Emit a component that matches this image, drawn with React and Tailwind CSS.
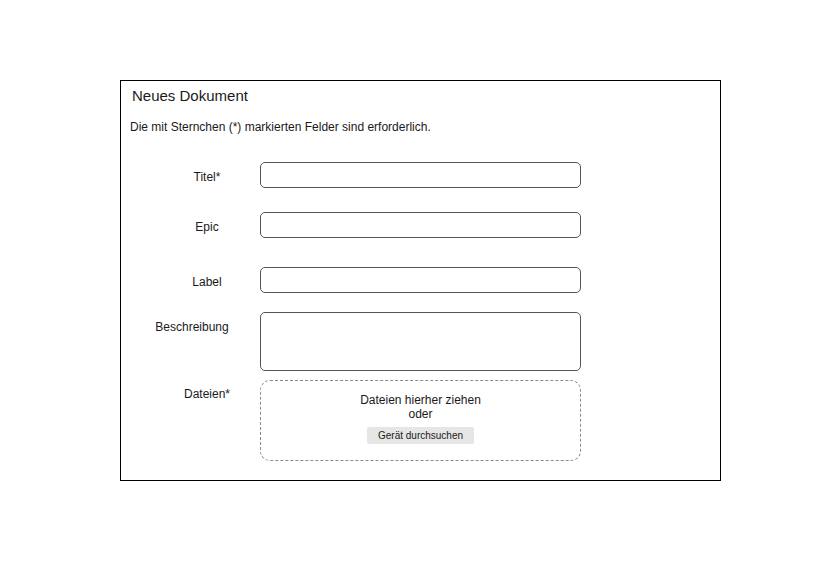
import React from "react";

const rows = [
  { label: "Titel*", gap: "mt-[28px]", h: "h-[26px]" },
  { label: "Epic", gap: "mt-[24px]", h: "h-[26px]" },
  { label: "Label", gap: "mt-[29px]", h: "h-[26px]" },
  { label: "Beschreibung", gap: "mt-[19px]", h: "h-[59px]", shift: true },
];

const App = () => {
  return (
    <div className="w-[827px] h-[583px] bg-white pt-[80px] pl-[120px] font-['Liberation_Sans',Arial,sans-serif] text-[#1a1a1a]">
      <div className="w-[601px] h-[401px] border border-black">
        <div className="pl-[11px] mt-[6px] text-[15px] leading-[18px]">Neues Dokument</div>
        <div className="pl-[9px] mt-[15px] text-[12px] leading-[14px]">
          Die mit Sternchen (*) markierten Felder sind erforderlich.
        </div>

        {rows.map((row) => (
          <div key={row.label} className={`flex items-start ml-[33px] ${row.gap}`}>
            <div className={`w-[106px] mt-[8px] text-center text-[12px] leading-[14px] ${row.shift ? "pr-[30px]" : ""}`}>
              {row.label}
            </div>
            <div className={`w-[321px] ${row.h} border border-[#555] rounded-[5px]`}></div>
          </div>
        ))}

        {/* upload */}
        <div className="flex items-start ml-[33px] mt-[9px]">
          <div className="w-[106px] mt-[7px] text-center text-[12px] leading-[14px]">Dateien*</div>
          <div className="w-[321px] h-[81px] border border-dashed border-[#8a8a8a] rounded-[10px] flex flex-col items-center pt-[12px]">
            <span className="text-[12px] leading-[14px]">Dateien hierher ziehen</span>
            <span className="text-[12px] leading-[14px]">oder</span>
            <button className="mt-[6px] w-[107px] h-[17px] bg-[#e6e6e6] rounded-[2px] text-[10px] leading-[17px] text-[#1a1a1a]">
              Gerät durchsuchen
            </button>
          </div>
        </div>
      </div>
    </div>
  );
};

export default App;
